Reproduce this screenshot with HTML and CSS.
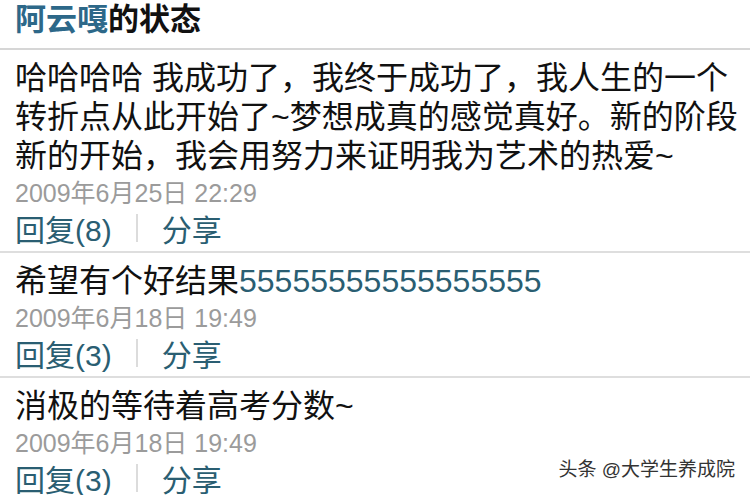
FILE: index.html
```html
<!DOCTYPE html>
<html lang="zh-CN">
<head>
  <meta charset="UTF-8" />
  <meta name="viewport" content="width=device-width, initial-scale=1.0"/>
  <title>阿云嘎的状态</title>
  <link rel="stylesheet" href="styles.css">
</head>
<body>
  <div class="page">
    <div class="header">
      <h1><span class="name">阿云嘎</span>的状态</h1>
    </div>

    <!-- status list -->
    <div class="post">
      <p class="text">哈哈哈哈 我成功了，我终于成功了，我人生的一个转折点从此开始了~梦想成真的感觉真好。新的阶段新的开始，我会用努力来证明我为艺术的热爱~</p>
      <div class="time">2009年6月25日 22:29</div>
      <div class="actions">
        <a href="#">回复(8)</a>
        <span class="sep"></span>
        <a href="#">分享</a>
      </div>
    </div>

    <div class="post">
      <p class="text">希望有个好结果<a href="#">55555555555555555</a></p>
      <div class="time">2009年6月18日 19:49</div>
      <div class="actions">
        <a href="#">回复(3)</a>
        <span class="sep"></span>
        <a href="#">分享</a>
      </div>
    </div>

    <div class="post">
      <p class="text">消极的等待着高考分数~</p>
      <div class="time">2009年6月18日 19:49</div>
      <div class="actions">
        <a href="#">回复(3)</a>
        <span class="sep"></span>
        <a href="#">分享</a>
      </div>
    </div>
  </div>

  <div class="watermark">头条 @大学生养成院</div>
</body>
</html>
```

FILE: styles.css
```css
* {
  margin: 0;
  padding: 0;
  box-sizing: border-box;
}

html, body {
  height: 100%;
  width: 100%;
  overflow: hidden;
  background: #fff;
  font-family: 'Liberation Sans', 'Noto Sans CJK SC', sans-serif;
  color: #111;
}

a {
  color: #2a5e72;
  text-decoration: none;
}

.page {
  position: relative;
}

.header {
  padding: 0 15px 8px;
  border-bottom: 2px solid #d6d6d6;
}

.header h1 {
  font-size: 31px;
  line-height: 40px;
  font-weight: bold;
  color: #111;
}

.header .name {
  color: #2d6889;
}

.post {
  padding: 9px 10px 7px 15px;
  border-bottom: 2px solid #dedede;
}

.text {
  font-size: 32px;
  line-height: 39px;
}

.time {
  font-size: 25px;
  line-height: 35px;
  color: #9b9b9b;
}

.actions {
  display: flex;
  align-items: center;
  height: 33px;
  font-size: 30px;
}

.actions .sep {
  width: 2px;
  height: 28px;
  background: #dcdcdc;
  margin: 0 24px;
}

.watermark {
  position: absolute;
  right: 15px;
  bottom: 14px;
  font-size: 19px;
  color: #333;
  text-shadow: 0 0 2px #fff, 1px 1px 0 #fff;
}
```
